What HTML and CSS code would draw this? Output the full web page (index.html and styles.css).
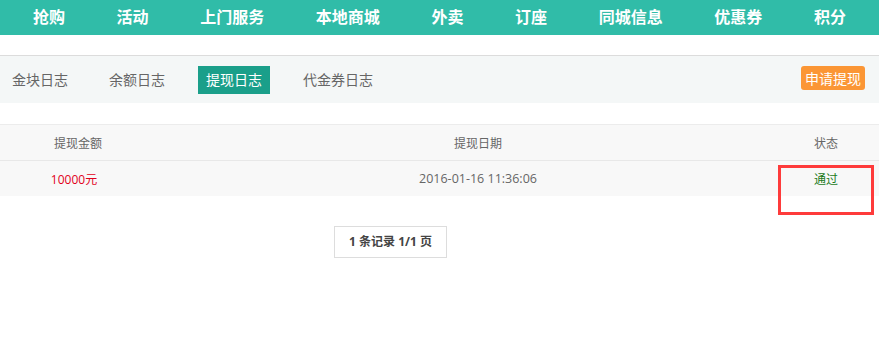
FILE: index.html
```html
<!DOCTYPE html>
<html lang="zh-CN">

<head>
    <meta charset="utf-8">
    <meta name="viewport" content="width=device-width, initial-scale=1.0">
    <title>提现日志</title>
    <link rel="stylesheet" href="styles.css">
</head>

<body>

    <header class="topnav">
        <a href="#">抢购</a>
        <a href="#">活动</a>
        <a href="#">上门服务</a>
        <a href="#">本地商城</a>
        <a href="#">外卖</a>
        <a href="#">订座</a>
        <a href="#">同城信息</a>
        <a href="#">优惠券</a>
        <a href="#">积分</a>
    </header>

    <section class="tabbar">
        <nav class="tabs">
            <a class="tab" href="#">金块日志</a>
            <a class="tab" href="#">余额日志</a>
            <a class="tab valgt" href="#">提现日志</a>
            <a class="tab" href="#">代金券日志</a>
        </nav>
        <button class="apply">申请提现</button>
    </section>

    <section class="log">
        <div class="row head">
            <span>提现金额</span>
            <span>提现日期</span>
            <span>状态</span>
        </div>
        <div class="row">
            <span class="money">10000元</span>
            <span class="date">2016-01-16 11:36:06</span>
            <span class="ok">通过</span>
        </div>
    </section>

    <div class="pager">1 条记录 1/1 页</div>

    <div class="mark"></div>

</body></html>
```

FILE: styles.css
```css
* {
    box-sizing: border-box;
}

body {
    margin: 0;
    font-family: 'Open Sans', 'Noto Sans CJK SC', sans-serif;
    font-size: 12px;
    color: #666;
    background: #fff;
}

.topnav {
    height: 35px;
    background: #30bca8;
    display: flex;
    justify-content: space-between;
    align-items: center;
    padding: 0 33px 2px;
}

.topnav a {
    color: #fff;
    font-size: 16px;
    font-weight: bold;
    text-decoration: none;
    line-height: 20px;
}

.tabbar {
    margin-top: 20px;
    height: 48px;
    border-top: 1px solid #dcdcdc;
    background: #f4f7f7;
    display: flex;
    justify-content: space-between;
    align-items: center;
    padding: 0 14px 0 4px;
}

.tabs {
    display: flex;
    gap: 25px;
}

.tab {
    display: block;
    height: 28px;
    line-height: 28px;
    padding: 0 8px;
    font-size: 14px;
    color: #666;
    text-decoration: none;
}

.valgt {
    background: #1a9f8a;
    color: #fff;
}

.apply {
    height: 24px;
    width: 64px;
    padding: 0;
    margin-top: -4px;
    border: 0;
    border-radius: 3px;
    background: #fb9635;
    color: #fff;
    font-family: inherit;
    font-size: 14px;
}

.log {
    margin-top: 21px;
    border-top: 1px solid #ececec;
    background: #f8f8f8;
}

.row {
    display: grid;
    grid-template-columns: 156px 644px 52px;
    height: 35px;
    align-items: center;
    text-align: center;
}

.head {
    border-bottom: 1px solid #e8e8e8;
    height: 36px;
}

.money {
    color: #e2001a;
    padding-right: 8px;
}

.date {
    font-size: 12.5px;
}

.ok {
    color: #1b7a1b;
}

.pager {
    margin: 30px 0 0 334px;
    width: 113px;
    height: 32px;
    line-height: 30px;
    border: 1px solid #ddd;
    text-align: center;
    font-weight: bold;
    color: #444;
}

.mark {
    position: absolute;
    top: 165px;
    left: 778px;
    width: 96px;
    height: 50px;
    border: 3px solid #fe3b3b;
}
```
